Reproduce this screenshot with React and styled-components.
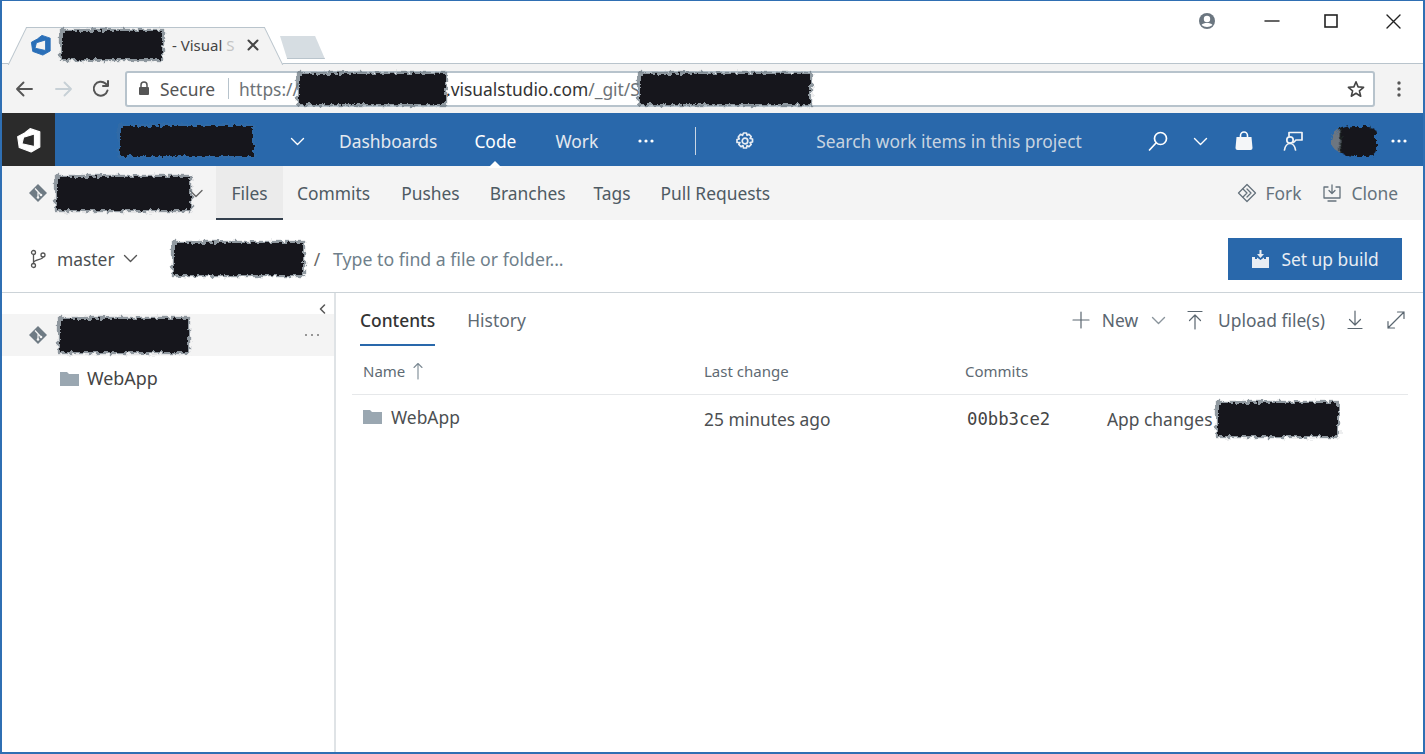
import React from 'react';
import styled, { createGlobalStyle } from 'styled-components';

const GlobalStyle = createGlobalStyle`
  html, body { margin: 0; padding: 0; background: #fff; }
  body { font-family: "Noto Sans", "Open Sans", "Liberation Sans", sans-serif; color: #333; }
  * { box-sizing: border-box; }
`;

const Window = styled.div`
  width: 1425px;
  height: 754px;
  overflow: hidden;
  display: flex;
  flex-direction: column;
  border: solid #2f6fb3;
  border-width: 1px 2px 2px 2px;
  background: #fff;
`;

/* browser chrome */
const TitleBar = styled.div`
  height: 63px;
  flex: none;
  display: flex;
  justify-content: space-between;
  align-items: flex-start;
  background: #fff;
  border-bottom: 1px solid #b9c4cc;
  position: relative;
`;

const TabStrip = styled.div`
  display: flex;
  align-items: flex-end;
  height: 63px;
  padding-left: 6px;
`;

const BrowserTab = styled.div`
  position: relative;
  width: 275px;
  height: 38px;
  margin-bottom: -1px;
  display: flex;
  align-items: center;
  padding: 0 0 2px 22px;
  font-size: 15px;
  color: #444;
  z-index: 1;
  &::before, &::after {
    content: '';
    position: absolute;
    top: 0;
    bottom: 0;
    width: 55%;
    background: #f3f3f3;
    border-top: 1px solid #b9c4cc;
    z-index: -1;
  }
  &::before { left: 9px; transform: skewX(-26deg); border-left: 1px solid #b9c4cc; }
  &::after { right: 9px; transform: skewX(26deg); border-right: 1px solid #b9c4cc; }
`;

const TabText = styled.span`
  white-space: nowrap;
  margin-left: 10px;
`;

const FadedText = styled.span`
  color: #c4c4c4;
`;

const TabClose = styled.span`
  margin-left: 12px;
  display: flex;
`;

const NewTab = styled.div`
  width: 45px;
  height: 23px;
  margin: 0 0 5px -3px;
  background: #d6dde2;
  border-bottom: 1px solid #b9c4cc;
  clip-path: polygon(0 0, 78% 0, 100% 100%, 16% 100%);
`;

const WindowControls = styled.div`
  display: flex;
  align-items: center;
  height: 40px;
  color: #333;
`;

const ControlSlot = styled.div`
  width: ${p => p.$w}px;
  display: flex;
  justify-content: center;
`;

const Toolbar = styled.div`
  height: 49px;
  flex: none;
  display: flex;
  align-items: center;
  background: #f3f3f3;
`;

const ToolButton = styled.div`
  width: ${p => p.$w || 37}px;
  display: flex;
  justify-content: center;
  flex: none;
`;

const AddressBar = styled.div`
  width: 1250px;
  height: 36px;
  flex: none;
  margin-left: 6px;
  display: flex;
  align-items: center;
  padding-left: 11px;
  background: #fff;
  border: 2px solid #b7c3cc;
  border-radius: 3px;
  font-size: 17.4px;
  color: #555;
  position: relative;
`;

const SecureLabel = styled.span`
  margin-left: 10px;
`;

const UrlDark = styled.span`
  margin-left: 1px;
  color: #333;
`;

const UrlDim = styled.span`
  color: #6d7276;
`;

const AddressSep = styled.span`
  width: 1px;
  height: 21px;
  margin: 0 10px 0 13px;
  background: #b7c3cc;
`;

const Redact = styled.span`
  display: inline-block;
  flex: none;
  width: ${p => p.$w}px;
  height: ${p => p.$h}px;
  margin: ${p => p.$m || 0};
  background: #17181b;
  box-shadow: 0 0 1px 2px rgba(110, 120, 130, ${p => p.$sharp ? 0.1 : 0.75});
  filter: url(#scribble);
`;

const Avatar = styled(Redact)`
  border-radius: 50% 20% 20% 50%;
  background: linear-gradient(90deg, #6d7680 0 16%, #17181b 24%);
  box-shadow: none;
`;

const FilterDefs = styled.svg`
  position: absolute;
  width: 0;
  height: 0;
`;

const StarSlot = styled.span`
  position: absolute;
  right: 8px;
  top: 7px;
  display: flex;
`;

/* product nav */
const NavBar = styled.div`
  height: 53px;
  flex: none;
  display: flex;
  align-items: center;
  padding-top: 3px;
  background: #2968ab;
  color: #e4e9ef;
  font-size: 17.4px;
`;

const LogoCell = styled.div`
  width: 53px;
  height: 53px;
  margin-top: -3px;
  flex: none;
  display: flex;
  align-items: center;
  justify-content: center;
  background: #2b2b2b;
`;

const NavLink = styled.span`
  position: relative;
  margin-left: ${p => p.$ml}px;
  white-space: nowrap;
  ${p => p.$active && `
    color: #fff;
    &::after {
      content: '';
      position: absolute;
      left: 50%;
      bottom: -15px;
      margin-left: -7px;
      border: 7px solid transparent;
      border-top: 0;
      border-bottom-color: #fff;
    }
  `}
`;

const NavIcon = styled.span`
  display: flex;
  flex: none;
  margin-left: ${p => p.$ml}px;
`;

const NavSep = styled.span`
  width: 1px;
  height: 28px;
  margin-left: ${p => p.$ml}px;
  background: #c9d6e4;
`;

const SearchHint = styled.span`
  margin-left: ${p => p.$ml}px;
  color: #c8d4e0;
  white-space: nowrap;
`;

/* repo tabs */
const SubNav = styled.div`
  height: 54px;
  flex: none;
  display: flex;
  align-items: center;
  background: #f4f4f4;
  font-size: 17.4px;
  color: #4e5a63;
`;

const SubTab = styled.span`
  margin-left: ${p => p.$ml}px;
  white-space: nowrap;
`;

const FilesTab = styled.span`
  height: 100%;
  width: 67px;
  margin-left: ${p => p.$ml}px;
  display: flex;
  align-items: center;
  justify-content: center;
  background: #ebebeb;
  border-bottom: 2px solid #333f4d;
  padding-top: 2px;
`;

const SubActions = styled.div`
  margin-left: auto;
  padding-right: 25px;
  display: flex;
  align-items: center;
  color: #65727c;
`;

const IconSlot = styled.span`
  display: flex;
  flex: none;
  margin: ${p => p.$m || 0};
`;

/* branch row */
const BranchRow = styled.div`
  height: 73px;
  flex: none;
  display: flex;
  align-items: center;
  padding-top: 5px;
  font-size: 17.4px;
  color: #4c4f52;
  border-bottom: 1px solid #ccd3d8;
`;

const BranchName = styled.span`
  margin-left: 11px;
`;

const PathSlash = styled.span`
  margin: 0 13px 0 11px;
  color: #666;
`;

const PathInput = styled.span`
  font-size: 17.7px;
  color: #6f7f8b;
`;

const BuildButton = styled.div`
  margin: 0 21px 0 auto;
  width: 174px;
  height: 42px;
  display: flex;
  align-items: center;
  justify-content: center;
  gap: 11px;
  background: #2968ab;
  color: #e8edf3;
  font-size: 17.4px;
`;

/* lower panes */
const Panes = styled.div`
  flex: 1;
  display: flex;
  min-height: 0;
`;

const Sidebar = styled.div`
  width: 334px;
  flex: none;
  border-right: 2px solid #dfe3e6;
  font-size: 17.4px;
  color: #444;
`;

const CollapseRow = styled.div`
  height: 21px;
  display: flex;
  justify-content: flex-end;
  align-items: flex-end;
  padding-right: 8px;
`;

const TreeRoot = styled.div`
  height: 42px;
  display: flex;
  align-items: center;
  background: #f4f4f4;
  padding-right: 13px;
`;

const MoreDots = styled.span`
  margin-left: auto;
  display: flex;
`;

const TreeItem = styled.div`
  height: 44px;
  display: flex;
  align-items: center;
  padding-left: 58px;
  gap: 8px;
  font-size: 17.9px;
`;

const Content = styled.div`
  flex: 1;
  min-width: 0;
  padding-left: 16px;
`;

const ContentBar = styled.div`
  height: 53px;
  display: flex;
  align-items: flex-start;
  padding: 15px 18px 0 8px;
  font-size: 17.4px;
`;

const ViewTab = styled.span`
  height: 38px;
  margin-right: 32px;
  color: ${p => p.$active ? '#333' : '#5e6a73'};
  font-weight: ${p => p.$active ? 500 : 400};
  border-bottom: ${p => p.$active ? '2px solid #2968ab' : 'none'};
`;

const ContentActions = styled.div`
  margin-left: auto;
  display: flex;
  align-items: center;
  height: 24px;
  color: #5a6670;
`;

const Table = styled.div`
  margin-right: 15px;
`;

const Row = styled.div`
  display: grid;
  grid-template-columns: 341px 261px 142px 1fr;
  align-items: center;
  padding: ${p => p.$pt || 0}px 0 0 11px;
  height: ${p => p.$h}px;
  font-size: ${p => p.$fs}px;
  color: ${p => p.$c};
  border-bottom: ${p => p.$line ? '1px solid #e6e8ea' : 'none'};
`;

const NameCell = styled.span`
  display: flex;
  align-items: center;
  gap: ${p => p.$gap}px;
  margin-top: ${p => p.$mt || 0}px;
`;

const Sha = styled.span`
  font-family: "DejaVu Sans Mono", "Liberation Mono", monospace;
  font-size: 17.3px;
  padding-left: 2px;
  color: #444;
`;

const CommitCell = styled.span`
  display: flex;
  align-items: center;
`;

/* icons */
const Svg = ({ s = 16, w, h, children, sw = 1.5, c = 'currentColor', vb = '0 0 16 16' }) => (
  <svg width={w || s} height={h || s} viewBox={vb} fill="none" stroke={c} strokeWidth={sw} strokeLinecap="round" strokeLinejoin="round">
    {children}
  </svg>
);

const Chevron = ({ c, w = 14 }) => (
  <Svg w={w} h={9} vb="0 0 14 9" c={c} sw={1.4}><path d="M1 1.5 7 7.5 13 1.5" /></Svg>
);

const VsLogo = ({ s, c }) => (
  <svg width={s} height={s} viewBox="0 0 24 24">
    <path fill={c} fillRule="evenodd" stroke={c} strokeWidth="1" strokeLinejoin="round" d="M13 1.500 22 4.500V18.500L14 23 3 19 1.500 9 8 5.500zM7 9.500 5.500 15.500 17 18V6.500z" />
  </svg>
);

const GitDiamond = () => (
  <svg width="20" height="20" viewBox="0 0 20 20">
    <path fill="#6f7b84" d="M10 1 19 10 10 19 1 10z" />
    <path stroke="#f4f4f4" strokeWidth="1.2" fill="none" d="M7 5.500 13 12M10 8.500v6" />
    <circle cx="13" cy="12" r="1.3" fill="#f4f4f4" />
    <circle cx="10" cy="14.500" r="1.3" fill="#f4f4f4" />
  </svg>
);

const Folder = () => (
  <svg width="19" height="15" viewBox="0 0 19 15">
    <path fill="#9aa7b1" d="M0 1h7l2 2h10v12H0z" />
  </svg>
);

const Dots = ({ c, r = 1.6 }) => (
  <svg width="18" height="6" viewBox="0 0 18 6" fill={c}>
    <circle cx="3" cy="3" r={r} /><circle cx="9" cy="3" r={r} /><circle cx="15" cy="3" r={r} />
  </svg>
);

export default function App() {
  return (
    <>
      <GlobalStyle />
      <FilterDefs aria-hidden="true">
        <filter id="scribble" x="-10%" y="-20%" width="120%" height="140%">
          <feTurbulence type="fractalNoise" baseFrequency="0.22" numOctaves="2" seed="4" />
          <feDisplacementMap in="SourceGraphic" scale="7" />
        </filter>
      </FilterDefs>
      <Window>
        <TitleBar>
          <TabStrip>
            <BrowserTab>
              <VsLogo s={22} c="#2a6fb8" />
              <Redact $w={100} $h={28} $m="0 0 0 10px" />
              <TabText>- Visual <FadedText>S</FadedText></TabText>
              <TabClose>
                <Svg s={12} vb="0 0 12 12" c="#444" sw={2}><path d="M1.500 1.500 10.500 10.500M10.500 1.500 1.500 10.500" /></Svg>
              </TabClose>
            </BrowserTab>
            <NewTab />
          </TabStrip>
          <WindowControls>
            <ControlSlot $w={76}>
              <svg width="18" height="18" viewBox="0 0 18 18">
                <circle cx="9" cy="9" r="8" fill="#6b7680" />
                <circle cx="9" cy="7" r="3.2" fill="#fff" />
                <path d="M3.500 13c2-2.600 9-2.600 11 0-3 2.600-8 2.600-11 0z" fill="#fff" />
              </svg>
            </ControlSlot>
            <ControlSlot $w={54}>
              <Svg w={16} h={2} vb="0 0 16 2" c="#333"><path d="M1 1h14" /></Svg>
            </ControlSlot>
            <ControlSlot $w={64}>
              <svg width="14" height="14" viewBox="0 0 14 14"><rect x="1" y="1" width="12" height="12" fill="none" stroke="#222" strokeWidth="1.6" /></svg>
            </ControlSlot>
            <ControlSlot $w={60}>
              <Svg s={15} vb="0 0 15 15" c="#222" sw={1.4}><path d="M1 1 14 14M14 1 1 14" /></Svg>
            </ControlSlot>
          </WindowControls>
        </TitleBar>

        <Toolbar>
          <ToolButton $w={44}>
            <Svg s={20} vb="0 0 20 20" c="#555" sw={1.9}><path d="M18 10H3M9.500 3.500 3 10l6.500 6.500" /></Svg>
          </ToolButton>
          <ToolButton $w={36}>
            <Svg s={20} vb="0 0 20 20" c="#c7d0d6" sw={1.9}><path d="M2 10h15M10.500 3.500 17 10l-6.500 6.500" /></Svg>
          </ToolButton>
          <ToolButton $w={37}>
            <Svg s={20} vb="0 0 20 20" c="#555" sw={2}><path d="M16.500 11.500A7 7 0 1 1 14.500 4.500L17 7M17 2v5h-5" /></Svg>
          </ToolButton>
          <AddressBar>
            <svg width="12" height="15" viewBox="0 0 12 15" style={{ flex: 'none' }}>
              <path d="M3 6V4a3 3 0 0 1 6 0v2" fill="none" stroke="#555" strokeWidth="1.5" />
              <rect x="1" y="6" width="10" height="8" fill="#555" rx="1" />
            </svg>
            <SecureLabel>Secure</SecureLabel>
            <AddressSep />
            <UrlDim>https://</UrlDim>
            <Redact $w={146} $h={30} />
            <UrlDark>.visualstudio.com</UrlDark><UrlDim>/_git/S</UrlDim>
            <Redact $w={170} $h={30} />
            <StarSlot>
              <svg width="18" height="18" viewBox="0 0 18 18"><path d="M9 1.800 11.100 6.900 16.600 7.300 12.400 10.900 13.700 16.200 9 13.300 4.300 16.200 5.600 10.900 1.400 7.300 6.900 6.900z" fill="none" stroke="#444" strokeWidth="1.6" strokeLinejoin="round" /></svg>
            </StarSlot>
          </AddressBar>
          <ToolButton $w={48}>
            <svg width="4" height="16" viewBox="0 0 4 16" fill="#555"><circle cx="2" cy="2" r="1.7" /><circle cx="2" cy="8" r="1.7" /><circle cx="2" cy="14" r="1.7" /></svg>
          </ToolButton>
        </Toolbar>

        <NavBar>
          <LogoCell><VsLogo s={26} c="#fff" /></LogoCell>
          <Redact $w={133} $h={30} $m="0 0 0 65px" $sharp />
          <NavIcon $ml={37}><Chevron c="#fff" w={15} /></NavIcon>
          <NavLink $ml={34}>Dashboards</NavLink>
          <NavLink $ml={37} $active>Code</NavLink>
          <NavLink $ml={39}>Work</NavLink>
          <NavIcon $ml={39}><Dots c="#fff" /></NavIcon>
          <NavSep $ml={40} />
          <NavIcon $ml={39}>
            <Svg s={20} vb="0 0 20 20" c="#e8edf3" sw={1.7}>
              <circle cx="10" cy="10" r="2.800" />
              <path d="M8.500 2h3l.5 2.300 2-1 2.200 2.200-1.100 2 2.400.5v3l-2.400.5 1.100 2-2.200 2.200-2-1.100-.5 2.400h-3l-.5-2.400-2 1.100-2.200-2.200 1.100-2L2 11.500v-3l2.300-.5-1-2L5.500 3.300l2 1z" />
            </Svg>
          </NavIcon>
          <SearchHint $ml={61}>Search work items in this project</SearchHint>
          <NavIcon $ml={65}>
            <Svg s={22} vb="0 0 22 22" c="#fff" sw={1.7}><circle cx="13.500" cy="8.500" r="6" /><path d="M9 13 2.500 20" /></Svg>
          </NavIcon>
          <NavIcon $ml={24}><Chevron c="#fff" w={15} /></NavIcon>
          <NavIcon $ml={26}>
            <svg width="20" height="20" viewBox="0 0 20 20"><path d="M6.500 6V4.500a3.500 3.500 0 0 1 7 0V6" fill="none" stroke="#fff" strokeWidth="1.600" /><path d="M2.500 6h15l1 11a2 2 0 0 1-2 2h-13a2 2 0 0 1-2-2z" fill="#f4f6f8" /></svg>
          </NavIcon>
          <NavIcon $ml={28}>
            <Svg s={22} vb="0 0 22 22" c="#f2f4f6" sw={1.7}>
              <path d="M7 6V2.500h13V10h-5M14 10l-2.500 2.500" />
              <circle cx="8" cy="10" r="3.200" />
              <path d="M2.500 20c.5-4 3-6.500 5.500-6.500s5 2.500 5.500 6.500" />
            </Svg>
          </NavIcon>
          <Avatar $w={45} $h={30} $m="0 0 0 27px" />
          <NavIcon $ml={14}><Dots c="#fff" /></NavIcon>
        </NavBar>

        <SubNav>
          <IconSlot $m="0 0 0 26px"><GitDiamond /></IconSlot>
          <Redact $w={133} $h={33} $m="0 0 0 9px" />
          <IconSlot $m="0 0 0 -1px"><Chevron c="#666" /></IconSlot>
          <FilesTab $ml={13}>Files</FilesTab>
          <SubTab $ml={14}>Commits</SubTab>
          <SubTab $ml={31}>Pushes</SubTab>
          <SubTab $ml={30}>Branches</SubTab>
          <SubTab $ml={28}>Tags</SubTab>
          <SubTab $ml={30}>Pull Requests</SubTab>
          <SubActions>
            <IconSlot $m="0 7px 0 0">
              <Svg w={22} h={20} vb="0 0 22 20" c="#65727c" sw={1.3}>
                <path d="M11 1.500 19.500 10 11 18.500 2.500 10z" />
                <path d="M7 6 11 10 7 14M11 6l4 4-4 4" />
              </Svg>
            </IconSlot>
            <span>Fork</span>
            <IconSlot $m="0 9px 0 21px">
              <Svg s={20} vb="0 0 20 20" c="#65727c" sw={1.3}>
                <path d="M6 4H2v11h16V4h-4M10 2v8M7 7.500l3 3 3-3M6 18h8" />
              </Svg>
            </IconSlot>
            <span>Clone</span>
          </SubActions>
        </SubNav>

        <BranchRow>
          <IconSlot $m="0 0 0 28px">
            <Svg w={16} h={20} vb="0 0 16 20" c="#555" sw={1.3}>
              <circle cx="3.500" cy="3.500" r="2" /><circle cx="3.500" cy="16.500" r="2" /><circle cx="13" cy="6" r="2" />
              <path d="M3.500 5.500v9M13 8c0 3-9.500 2.500-9.500 6" />
            </Svg>
          </IconSlot>
          <BranchName>master</BranchName>
          <IconSlot $m="0 0 0 8px"><Chevron c="#555" w={15} /></IconSlot>
          <Redact $w={129} $h={32} $m="0 0 0 36px" />
          <PathSlash>/</PathSlash>
          <PathInput>Type to find a file or folder...</PathInput>
          <BuildButton>
            <svg width="19" height="18" viewBox="0 0 19 18" fill="#e8edf3">
              <path d="M8.500 0h2v4H13l-3.500 4L6 4h2.500z" />
              <path d="M1 7h3v2h2V7.500L9.500 10 13 7.500V9h2V7h3v11H1z" />
            </svg>
            <span>Set up build</span>
          </BuildButton>
        </BranchRow>

        <Panes>
          <Sidebar>
            <CollapseRow>
              <Svg w={7} h={10} vb="0 0 7 10" c="#555" sw={1.5}><path d="M5.500 1 1.500 5l4 4" /></Svg>
            </CollapseRow>
            <TreeRoot>
              <IconSlot $m="0 0 0 26px"><GitDiamond /></IconSlot>
              <Redact $w={128} $h={33} $m="0 0 0 12px" />
              <MoreDots><Dots c="#777" r={1} /></MoreDots>
            </TreeRoot>
            <TreeItem><Folder /><span>WebApp</span></TreeItem>
          </Sidebar>
          <Content>
            <ContentBar>
              <ViewTab $active>Contents</ViewTab>
              <ViewTab>History</ViewTab>
              <ContentActions>
                <Svg s={18} vb="0 0 18 18" c="#5a6670" sw={1.2}><path d="M9 1v16M1 9h16" /></Svg>
                <IconSlot $m="0 0 0 12px">New</IconSlot>
                <IconSlot $m="0 0 0 13px"><Chevron c="#8a949c" w={15} /></IconSlot>
                <IconSlot $m="0 0 0 21px">
                  <Svg w={16} h={20} vb="0 0 16 20" c="#5a6670" sw={1.2}><path d="M1 1.500h14M8 19V5M2.500 10.500 8 5l5.500 5.500" /></Svg>
                </IconSlot>
                <IconSlot $m="0 0 0 15px">Upload file(s)</IconSlot>
                <IconSlot $m="0 0 0 22px">
                  <Svg w={16} h={20} vb="0 0 16 20" c="#5a6670" sw={1.2}><path d="M1 18.500h14M8 1v14M2.500 9.500 8 15l5.500-5.500" /></Svg>
                </IconSlot>
                <IconSlot $m="0 0 0 24px">
                  <Svg s={18} vb="0 0 18 18" c="#5a6670" sw={1.2}><path d="M1 17 17 1M10.500 1H17v6.500M1 10.500V17h6.500" /></Svg>
                </IconSlot>
              </ContentActions>
            </ContentBar>
            <Table>
              <Row $h={49} $pt={2} $fs={15} $c="#5e6a73" $line>
                <NameCell $gap={8}>
                  <span>Name</span>
                  <Svg w={10} h={18} vb="0 0 10 18" c="#7c8a94" sw={1.1}><path d="M5 17V1.500M1 5.500l4-4 4 4" /></Svg>
                </NameCell>
                <span>Last change</span>
                <span>Commits</span>
                <span />
              </Row>
              <Row $h={48} $fs={17.4} $c="#4c4f52">
                <NameCell $gap={9} $mt={-5}><Folder /><span>WebApp</span></NameCell>
                <span>25 minutes ago</span>
                <Sha>00bb3ce2</Sha>
                <CommitCell>
                  <span>App changes</span>
                  <Redact $w={119} $h={33} $m="0 0 0 6px" />
                </CommitCell>
              </Row>
            </Table>
          </Content>
        </Panes>
      </Window>
    </>
  );
}
